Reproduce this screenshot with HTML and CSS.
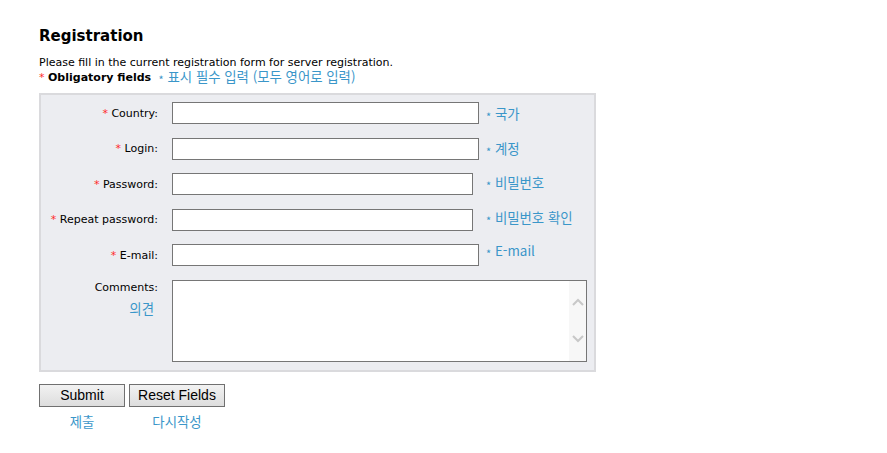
FILE: index.html
```html
<!DOCTYPE html>
<html lang="ko">
<head>
    <meta charset="UTF-8">
    <title>Registration</title>
    <link rel="stylesheet" href="styles.css">
</head>
<body>
    <h2>Registration</h2>
    <p class="intro">Please fill in the current registration form for server registration.</p>
    <p class="oblig"><span class="req">*</span> <b>Obligatory fields</b> <span class="ko"><span class="star">*</span> 표시 필수 입력 (모두 영어로 입력)</span></p>

    <form class="regbox">
        <label class="lbl"><span class="req">*</span> Country:</label>
        <input type="text" class="field">
        <span class="ko note"><span class="star">*</span> 국가</span>

        <label class="lbl"><span class="req">*</span> Login:</label>
        <input type="text" class="field">
        <span class="ko note"><span class="star">*</span> 계정</span>

        <label class="lbl"><span class="req">*</span> Password:</label>
        <input type="password" class="field short">
        <span class="ko note up"><span class="star">*</span> 비밀번호</span>

        <label class="lbl"><span class="req">*</span> Repeat password:</label>
        <input type="password" class="field short">
        <span class="ko note up"><span class="star">*</span> 비밀번호 확인</span>

        <label class="lbl"><span class="req">*</span> E-mail:</label>
        <input type="text" class="field">
        <span class="ko note top"><span class="star">*</span> E-mail</span>

        <div class="lbl comm">
            Comments:
            <span class="ko">의견</span>
        </div>
        <div class="tawrap">
            <textarea></textarea>
            <div class="sbar">
                <svg width="12" height="8" viewBox="0 0 12 8"><path d="M1 7 L6 2 L11 7" fill="none" stroke="#c8c8c8" stroke-width="2"/></svg>
                <svg width="12" height="8" viewBox="0 0 12 8"><path d="M1 1 L6 6 L11 1" fill="none" stroke="#c8c8c8" stroke-width="2"/></svg>
            </div>
        </div>
    </form>

    <div class="buttons">
        <div class="btncol">
            <button type="button" class="btn submit">Submit</button>
            <span class="ko">제출</span>
        </div>
        <div class="btncol">
            <button type="button" class="btn reset">Reset Fields</button>
            <span class="ko">다시작성</span>
        </div>
    </div>
</body>
</html>
```

FILE: styles.css
```css
body {
    margin: 0;
    padding: 26px 0 0 39px;
    font-family: "DejaVu Sans", Verdana, sans-serif;
    font-size: 11px;
    color: #000;
    background: #fff;
}
h2 {
    font-size: 15px;
    margin: 0 0 10px 0;
    line-height: 20px;
}
.intro {
    margin: 0;
    line-height: 13px;
}
.oblig {
    margin: 0 0 11px 0;
    line-height: 13px;
    height: 13px;
}
.req {
    color: #ff2a2a;
}
.ko {
    font-family: "Noto Sans CJK KR", "Noto Sans", sans-serif;
    font-size: 13.4px;
    color: #3a96c9;
    line-height: 18px;
}
.oblig .ko {
    margin-left: 4px;
    position: relative;
    top: 1px;
    line-height: 13px;
}
.star {
    font-size: 11px;
    position: relative;
    top: 2px;
}
.regbox {
    width: 553px;
    background-color: #ecedf1;
    border: 2px solid #dadadd;
    padding: 7px 0 8px 0;
    margin: 0;
    display: grid;
    grid-template-columns: 117px 321px auto;
    row-gap: 13.5px;
    align-items: center;
}
.lbl {
    text-align: right;
    white-space: nowrap;
}
.field {
    grid-column: 2;
    width: 307px;
    height: 22px;
    box-sizing: border-box;
    border: 1px solid #767676;
    background: #fff;
    margin: 0 0 0 14px;
}
.field.short {
    width: 301px;
}
.note {
    padding-left: 7px;
    white-space: nowrap;
}
.note.up {
    position: relative;
    top: -2px;
}
.note.top {
    position: relative;
    top: -5px;
}
.comm {
    align-self: start;
    display: flex;
    flex-direction: column;
    align-items: flex-end;
    padding-top: 1px;
    gap: 5px;
    line-height: 13px;
}
.comm .ko {
    padding-right: 4px;
}
.tawrap {
    grid-column: 2 / 4;
    margin-left: 14px;
    width: 415px;
    height: 82px;
    box-sizing: border-box;
    border: 1px solid #767676;
    background: #fff;
    display: flex;
}
.tawrap textarea {
    flex: 1;
    border: none;
    margin: 0;
    resize: none;
    outline: none;
}
.sbar {
    width: 17px;
    background: #f7f7f7;
    display: flex;
    flex-direction: column;
    align-items: center;
    justify-content: space-between;
    padding: 17px 0 18px 0;
}
.buttons {
    display: flex;
    gap: 4px;
    margin-top: 12px;
}
.btncol {
    display: flex;
    flex-direction: column;
    align-items: center;
    gap: 5px;
}
.btn {
    font-family: "Liberation Sans", Arial, sans-serif;
    font-size: 14px;
    height: 23px;
    border: 1px solid #707070;
    background: linear-gradient(#f2f2f2, #dddddd);
    padding: 0;
    color: #000;
}
.submit {
    width: 86px;
}
.reset {
    width: 96px;
}
```
